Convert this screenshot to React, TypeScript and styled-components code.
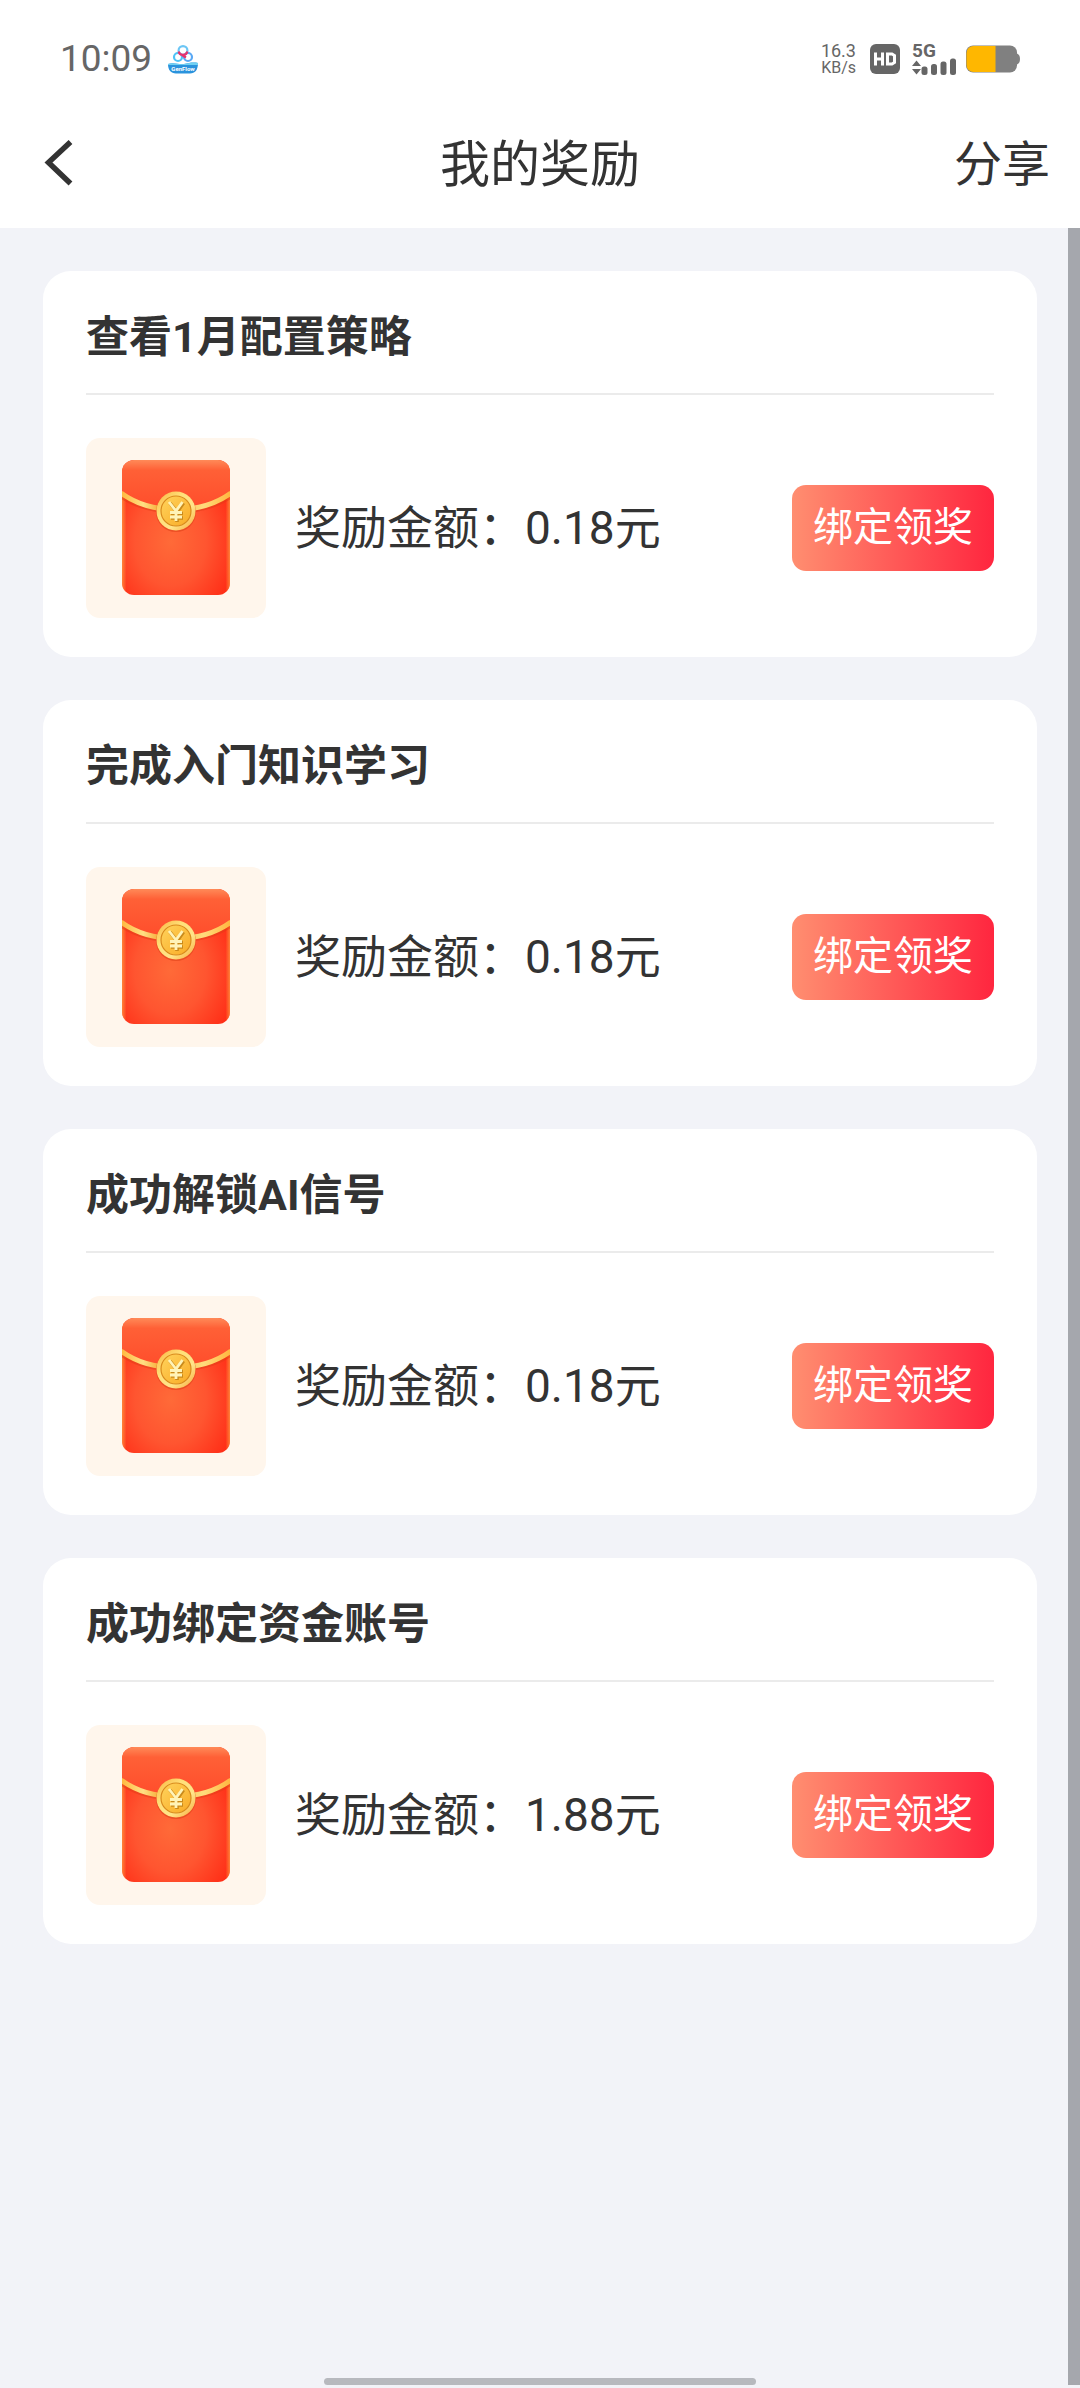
import React from "react";
import styled, { createGlobalStyle } from "styled-components";

const GlobalStyle = createGlobalStyle`
  * {
    box-sizing: border-box;
  }

  body {
    margin: 0;
    background: #f2f3f8;
    color: #333333;
    font-family: Roboto, "Noto Sans CJK SC", sans-serif;
  }

  button {
    margin: 0;
    padding: 0;
    border: 0;
    background: none;
    color: inherit;
    font: inherit;
    cursor: pointer;
  }
`;

const Page = styled.div`
  position: relative;
  display: flex;
  flex-direction: column;
  min-height: 100vh;
`;

const Header = styled.header`
  background: #ffffff;
`;

const StatusBar = styled.div`
  display: flex;
  align-items: center;
  justify-content: space-between;
  height: 98px;
  padding: 20px 60px 0;
  color: #666666;
`;

const StatusGroup = styled.div<{ $gap: number }>`
  display: flex;
  align-items: center;
  gap: ${({ $gap }) => $gap}px;
`;

const Clock = styled.time`
  font-size: 37px;
  line-height: 40px;
`;

const Speed = styled.div`
  display: flex;
  flex-direction: column;
  align-items: flex-end;
  margin-right: 4px;
  line-height: 17px;
`;

const SpeedValue = styled.span`
  font-size: 18px;
`;

const SpeedUnit = styled.span`
  font-size: 16px;
`;

const Network = styled.div`
  display: flex;
  flex-direction: column;
  width: 44px;
  margin-left: 2px;
`;

const NetworkLabel = styled.span`
  font-size: 19px;
  font-weight: 700;
  line-height: 14px;
`;

const NavBar = styled.nav`
  display: grid;
  grid-template-columns: 1fr auto 1fr;
  align-items: center;
  height: 130px;
  padding: 0 30px;
`;

const BackButton = styled.button`
  display: flex;
  justify-self: start;
  padding-left: 13px;
`;

const PageTitle = styled.h1`
  margin: 0;
  padding-top: 4px;
  font-size: 50px;
  font-weight: 400;
  line-height: 60px;
`;

const ShareButton = styled.button`
  justify-self: end;
  padding-top: 4px;
  font-size: 48px;
  line-height: 60px;
`;

const Content = styled.main`
  position: relative;
  flex: 1;
  padding: 43px;
`;

const RewardList = styled.ul`
  display: flex;
  flex-direction: column;
  gap: 43px;
  margin: 0;
  padding: 0;
  list-style: none;
`;

const Card = styled.li`
  padding: 0 43px 39px;
  border-radius: 28px;
  background: #ffffff;
`;

const CardTitle = styled.h2`
  margin: 0;
  padding: 37px 0 27px;
  border-bottom: 2px solid #ebebeb;
  font-size: 43px;
  font-weight: 700;
  line-height: 58px;
`;

const CardBody = styled.div`
  display: flex;
  align-items: center;
  gap: 29px;
  padding-top: 43px;
`;

const Thumb = styled.div`
  display: flex;
  align-items: center;
  justify-content: center;
  width: 180px;
  height: 180px;
  border-radius: 14px;
  background: #fff6ec;
`;

const Amount = styled.p`
  flex: 1;
  margin: 0;
  font-size: 46px;
  line-height: 60px;
`;

const ClaimButton = styled.button`
  height: 86px;
  padding: 0 21px;
  border-radius: 14px;
  background: linear-gradient(90deg, #ff8e70, #ff263f);
  color: #ffffff;
  font-size: 40px;
  line-height: 60px;
`;

const ScrollThumb = styled.div`
  position: absolute;
  top: 0;
  right: 0;
  bottom: 3px;
  width: 12px;
  background: #a5a7ad;
`;

const HomeIndicator = styled.div`
  position: absolute;
  bottom: 3px;
  left: 30%;
  width: 40%;
  height: 7px;
  border-radius: 4px;
  background: #b7b9be;
`;

const GenFlowIcon = () => (
  <svg width="30" height="30" viewBox="0 0 30 30" aria-hidden="true">
    <g fill="none" strokeWidth="2.2">
      <circle cx="10" cy="13" r="4" stroke="#4fc3f7" />
      <circle cx="20" cy="13" r="4" stroke="#5aa9f5" />
      <circle cx="15" cy="6.500" r="4.400" stroke="#6cc6f5" />
      <path d="M10.700 7.500a4.400 4.400 0 0 0 8.600 0" stroke="#e8326e" />
      <path d="M14 11l4 2.500" stroke="#e8326e" />
    </g>
    <path d="M0 20c6-2 11 1 16 0s9-2 14-1c0 7-3 10.500-8 10.500H8C3 29.500 0 26 0 20z" fill="#2a93dd" />
    <path d="M0 20c6-2 11 1 16 0s9-2 14-1v2H0z" fill="#6fd0f2" />
    <text x="15" y="27" fill="#ffffff" fontSize="6" fontWeight="700" textAnchor="middle">
      GenFlow
    </text>
  </svg>
);

const HdIcon = () => (
  <svg width="30" height="30" viewBox="0 0 30 30" aria-label="HD">
    <rect width="30" height="30" rx="6" fill="#666666" />
    <path d="M5.500 8.500v13M12.500 8.500v13M5.500 15h7" fill="none" stroke="#ffffff" strokeWidth="3" />
    <path d="M17.500 10h4.500l2.500 1.500v7L22 20h-4.500z" fill="none" stroke="#ffffff" strokeWidth="3" />
  </svg>
);

const SignalBars = () => (
  <svg width="44" height="17" viewBox="0 13 44 17" fill="#666666" aria-hidden="true">
    <path d="M4.500 15.500L9 21H0zM4.500 29.500L9 24H0z" />
    <rect x="9.500" y="21.500" width="6" height="8.500" rx="2.500" />
    <rect x="19" y="19" width="6" height="11" rx="2.500" />
    <rect x="28.500" y="16.500" width="6" height="13.500" rx="2.500" />
    <rect x="38" y="13.500" width="6" height="16.500" rx="2.500" />
  </svg>
);

const BatteryIcon = () => (
  <svg width="54" height="28" viewBox="0 0 54 28" aria-hidden="true">
    <path d="M50 8c3 1 4 3 4 6s-1 5-4 6z" fill="#808080" />
    <rect y="0.500" width="51" height="27" rx="7" fill="#808080" />
    <path d="M29.500 1H7.500a7 7 0 0 0-7 7v12a7 7 0 0 0 7 7h22z" fill="#ffb700" />
  </svg>
);

const BackIcon = () => (
  <svg width="30" height="46" viewBox="0 0 30 46" aria-hidden="true">
    <path d="M27.500 2L5.500 22.500l22 21" fill="none" stroke="#333333" strokeWidth="5.500" />
  </svg>
);

const RedPacket = () => (
  <svg width="110" height="136" viewBox="0 0 110 136" aria-hidden="true">
    <defs>
      <radialGradient id="packetBody" cx="0.45" cy="0.6" r="0.65">
        <stop offset="0" stopColor="#ff6a38" />
        <stop offset="0.5" stopColor="#ff5530" />
        <stop offset="1" stopColor="#ff2a14" />
      </radialGradient>
      <linearGradient id="packetEdge" x1="0" x2="1" y1="0" y2="0">
        <stop offset="0" stopColor="#ff9c40" stopOpacity="0.9" />
        <stop offset="0.05" stopColor="#ff9c40" stopOpacity="0" />
        <stop offset="0.95" stopColor="#ff9c40" stopOpacity="0" />
        <stop offset="1" stopColor="#ff9c40" stopOpacity="0.9" />
      </linearGradient>
      <linearGradient id="packetFlap" x1="0" x2="0" y1="0" y2="1">
        <stop offset="0" stopColor="#ff8a58" />
        <stop offset="0.2" stopColor="#ff6036" />
        <stop offset="1" stopColor="#ff4c2b" />
      </linearGradient>
      <linearGradient id="packetCord" x1="0" x2="1" y1="0" y2="0">
        <stop offset="0" stopColor="#ffb83c" />
        <stop offset="0.2" stopColor="#ffdf84" />
        <stop offset="0.35" stopColor="#f7ac38" />
        <stop offset="0.75" stopColor="#ffdc7c" />
        <stop offset="1" stopColor="#ffb63e" />
      </linearGradient>
      <linearGradient id="coinRim" x1="0" x2="1" y1="0" y2="1">
        <stop offset="0" stopColor="#f9b23c" />
        <stop offset="0.35" stopColor="#ffdf78" />
        <stop offset="0.65" stopColor="#ffe48a" />
        <stop offset="1" stopColor="#f7a733" />
      </linearGradient>
      <linearGradient id="coinFace" x1="0" x2="1" y1="0" y2="1">
        <stop offset="0" stopColor="#ffd35c" />
        <stop offset="1" stopColor="#f9ab26" />
      </linearGradient>
      <clipPath id="packetShape">
        <rect x="1" y="0" width="108" height="135" rx="12" />
      </clipPath>
    </defs>
    <g clipPath="url(#packetShape)">
      <rect width="110" height="136" fill="url(#packetBody)" />
      <rect width="110" height="136" fill="url(#packetEdge)" />
      <path d="M0 0h110v33C80 57 30 57 0 33z" fill="url(#packetFlap)" />
      <path d="M0 37C30 57 80 57 110 37" fill="none" stroke="#e23a16" strokeOpacity="0.5" strokeWidth="3" />
      <path d="M0 33C30 55 80 55 110 33" fill="none" stroke="url(#packetCord)" strokeWidth="5" />
    </g>
    <circle cx="55" cy="52" r="20" fill="#d93c14" fillOpacity="0.5" />
    <circle cx="55" cy="51" r="19.500" fill="url(#coinRim)" />
    <circle cx="55" cy="51" r="15" fill="url(#coinFace)" stroke="#d98a1c" strokeWidth="1.200" />
    <g fill="none" strokeWidth="3.600">
      <path d="M49 43l7 9 6.500-9M56 52v10M50 53.500h12M50 58h12" stroke="#c98a1c" />
      <path d="M48 42l7 9 6.500-9M55 51v10M49 52.500h12M49 57h12" stroke="#fff3b8" strokeWidth="2.800" />
    </g>
  </svg>
);

interface Reward {
  title: string;
  amount: string;
}

const rewards: Reward[] = [
  { title: "查看1月配置策略", amount: "0.18" },
  { title: "完成入门知识学习", amount: "0.18" },
  { title: "成功解锁AI信号", amount: "0.18" },
  { title: "成功绑定资金账号", amount: "1.88" },
];

const RewardCard = ({ title, amount }: Reward) => (
  <Card>
    <CardTitle>{title}</CardTitle>
    <CardBody>
      <Thumb>
        <RedPacket />
      </Thumb>
      <Amount>奖励金额：{amount}元</Amount>
      <ClaimButton type="button">绑定领奖</ClaimButton>
    </CardBody>
  </Card>
);

export default function App() {
  return (
    <Page lang="zh-CN">
      <GlobalStyle />
      <Header>
        <StatusBar>
          <StatusGroup $gap={16}>
            <Clock>10:09</Clock>
            <GenFlowIcon />
          </StatusGroup>
          <StatusGroup $gap={10}>
            <Speed>
              <SpeedValue>16.3</SpeedValue>
              <SpeedUnit>KB/s</SpeedUnit>
            </Speed>
            <HdIcon />
            <Network>
              <NetworkLabel>5G</NetworkLabel>
              <SignalBars />
            </Network>
            <BatteryIcon />
          </StatusGroup>
        </StatusBar>
        <NavBar>
          <BackButton type="button" aria-label="返回">
            <BackIcon />
          </BackButton>
          <PageTitle>我的奖励</PageTitle>
          <ShareButton type="button">分享</ShareButton>
        </NavBar>
      </Header>
      <Content>
        <RewardList>
          {rewards.map((reward) => (
            <RewardCard key={reward.title} {...reward} />
          ))}
        </RewardList>
        <ScrollThumb />
      </Content>
      <HomeIndicator />
    </Page>
  );
}
